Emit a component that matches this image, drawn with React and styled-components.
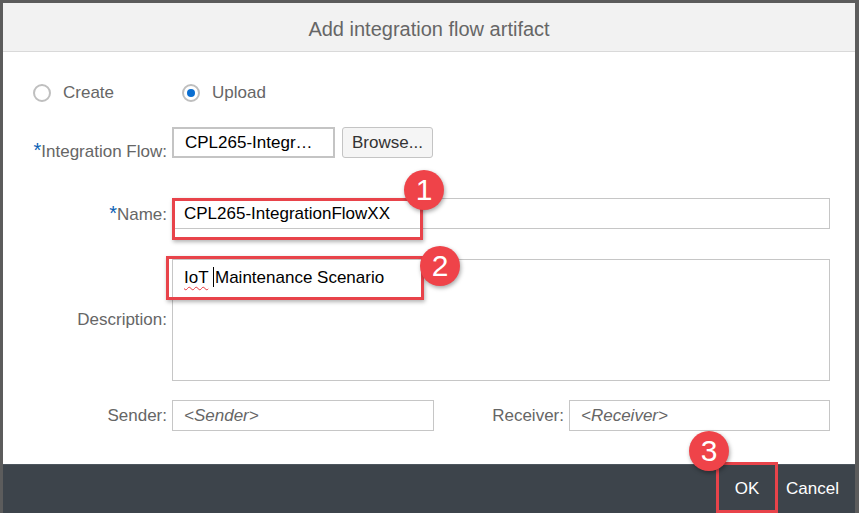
import React from "react"
import styled, { createGlobalStyle } from 'styled-components'

const GlobalStyle = createGlobalStyle`
    html, body {
        margin: 0;
        padding: 0;
        background: #5c5c5c;
        font-family: 'Liberation Sans', Arial, sans-serif;
    }
`

const Frame = styled.div`
    width: 859px;
    height: 513px;
    box-sizing: border-box;
    padding: 3px 4px 0 3px;
    background: #5c5c5c;
    display: flex;
`

const Dialog = styled.div`
    flex: 1;
    display: flex;
    flex-direction: column;
    background: #fff;
`

const Header = styled.div`
    height: 49px;
    box-sizing: border-box;
    padding-top: 5px;
    background: #f2f2f2;
    border-bottom: 1px solid #d9d9d9;
    display: flex;
    align-items: center;
    justify-content: center;
    font-size: 20px;
    color: #666;
`

const Content = styled.div`
    flex: 1;
    padding: 31px 25px 0 0;
    display: flex;
    flex-direction: column;
`

const RadioRow = styled.div`
    display: flex;
    align-items: center;
    height: 20px;
    padding-left: 30px;
    gap: 68px;
`

const RadioOption = styled.label`
    display: flex;
    align-items: center;
    gap: 12px;
    font-size: 17px;
    color: #666;
`

const RadioCircle = styled.span`
    width: 14px;
    height: 14px;
    border-radius: 50%;
    border: 2px solid #bfbfbf;
    display: flex;
    align-items: center;
    justify-content: center;
    &::after {
        content: '';
        width: 8px;
        height: 8px;
        border-radius: 50%;
        background: ${p => (p.$checked ? '#0a6ed1' : 'transparent')};
    }
`

const Row = styled.div`
    display: flex;
    align-items: ${p => p.$align || 'center'};
    margin-top: ${p => p.$top}px;
`

const Label = styled.div`
    width: ${p => p.$width || 169}px;
    height: ${p => (p.$drop ? '31px' : 'auto')};
    flex: none;
    box-sizing: border-box;
    padding-right: 5px;
    padding-top: ${p => p.$drop || 0}px;
    text-align: right;
    font-size: 17px;
    color: #666;
    white-space: nowrap;
`

const Star = styled.span`
    color: #0a5fb4;
    font-size: 20px;
`

const Field = styled.div`
    position: relative;
    box-sizing: border-box;
    height: ${p => p.$height || 31}px;
    width: ${p => (p.$width ? p.$width + 'px' : 'auto')};
    flex: ${p => (p.$width ? 'none' : 1)};
    border: ${p => p.$thick ? '2px solid #c4c4c4' : '1px solid #c6c6c6'};
    background: #fff;
    padding: 0 11px;
    display: flex;
    align-items: ${p => p.$multi ? 'flex-start' : 'center'};
    padding-top: ${p => p.$multi ? '7px' : '0'};
    font-size: 17px;
    color: #000;
    white-space: nowrap;
`

const Placeholder = styled.span`
    font-style: italic;
    color: #666;
`

const Squiggle = styled.span`
    text-decoration: underline wavy #e8383d;
    text-decoration-thickness: 1px;
    text-underline-offset: 3px;
`

const Caret = styled.span`
    display: inline-block;
    width: 1px;
    height: 20px;
    background: #000;
    margin-right: 1px;
    vertical-align: -4px;
`

const BrowseButton = styled.button`
    margin-left: 7px;
    height: 31px;
    padding: 0 9px;
    background: #f5f5f5;
    border: 1px solid #c4c4c4;
    border-radius: 3px;
    font-family: inherit;
    font-size: 17px;
    color: #333;
`

const Highlight = styled.div`
    position: absolute;
    left: ${p => p.$left}px;
    top: ${p => p.$top}px;
    width: ${p => p.$w}px;
    height: ${p => p.$h}px;
    box-sizing: border-box;
    border: 3px solid #e8434a;
    box-shadow: 1px 2px 4px rgba(0, 0, 0, 0.3);
    pointer-events: none;
`

const Badge = styled.div`
    position: absolute;
    left: ${p => p.$left}px;
    top: ${p => p.$top}px;
    width: 40px;
    height: 40px;
    border-radius: 50%;
    background: #ef4349;
    color: #fff;
    font-size: 30px;
    display: flex;
    align-items: center;
    justify-content: center;
    box-shadow: 1px 2px 4px rgba(0, 0, 0, 0.35);
    z-index: 2;
`

const Footer = styled.div`
    height: 48px;
    background: #3d444b;
    border-top: 1px solid #4d565e;
    display: flex;
    justify-content: flex-end;
    align-items: stretch;
    padding-right: 8px;
`

const FooterButton = styled.button`
    position: relative;
    background: transparent;
    border: ${p => p.$marked ? '3px solid #e8434a' : 'none'};
    margin-top: ${p => p.$marked ? '-3px' : '0'};
    width: ${p => p.$marked ? '62px' : 'auto'};
    padding: 0 8px;
    padding-top: ${p => p.$marked ? '2px' : '0'};
    box-sizing: border-box;
    color: #fff;
    font-family: inherit;
    font-size: 17px;
`

export default () => (
    <>
        <GlobalStyle />
        <Frame>
            <Dialog>
                <Header>Add integration flow artifact</Header>
                <Content>
                    <RadioRow>
                        <RadioOption><RadioCircle />Create</RadioOption>
                        <RadioOption><RadioCircle $checked />Upload</RadioOption>
                    </RadioRow>

                    <Row $top={24} $align="flex-start">
                        <Label $drop={12}><Star>*</Star>Integration Flow:</Label>
                        <Field $width={163} $thick>CPL265-Integr…</Field>
                        <BrowseButton>Browse...</BrowseButton>
                    </Row>

                    <Row $top={40}>
                        <Label><Star>*</Star>Name:</Label>
                        <Field>
                            CPL265-IntegrationFlowXX
                            <Highlight $left={-1} $top={-1} $w={251} $h={42} />
                            <Badge $left={231} $top={-29}>1</Badge>
                        </Field>
                    </Row>

                    <Row $top={30}>
                        <Label>Description:</Label>
                        <Field $height={122} $multi>
                            <span><Squiggle>IoT</Squiggle> <Caret />Maintenance Scenario</span>
                            <Highlight $left={-7} $top={-4} $w={258} $h={44} />
                            <Badge $left={247} $top={-14}>2</Badge>
                        </Field>
                    </Row>

                    <Row $top={19}>
                        <Label>Sender:</Label>
                        <Field $width={262}><Placeholder>&lt;Sender&gt;</Placeholder></Field>
                        <Label $width={135}>Receiver:</Label>
                        <Field><Placeholder>&lt;Receiver&gt;</Placeholder></Field>
                    </Row>
                </Content>
                <Footer>
                    <FooterButton $marked>
                        OK
                        <Badge $left={-30} $top={-34}>3</Badge>
                    </FooterButton>
                    <FooterButton>Cancel</FooterButton>
                </Footer>
            </Dialog>
        </Frame>
    </>
)
